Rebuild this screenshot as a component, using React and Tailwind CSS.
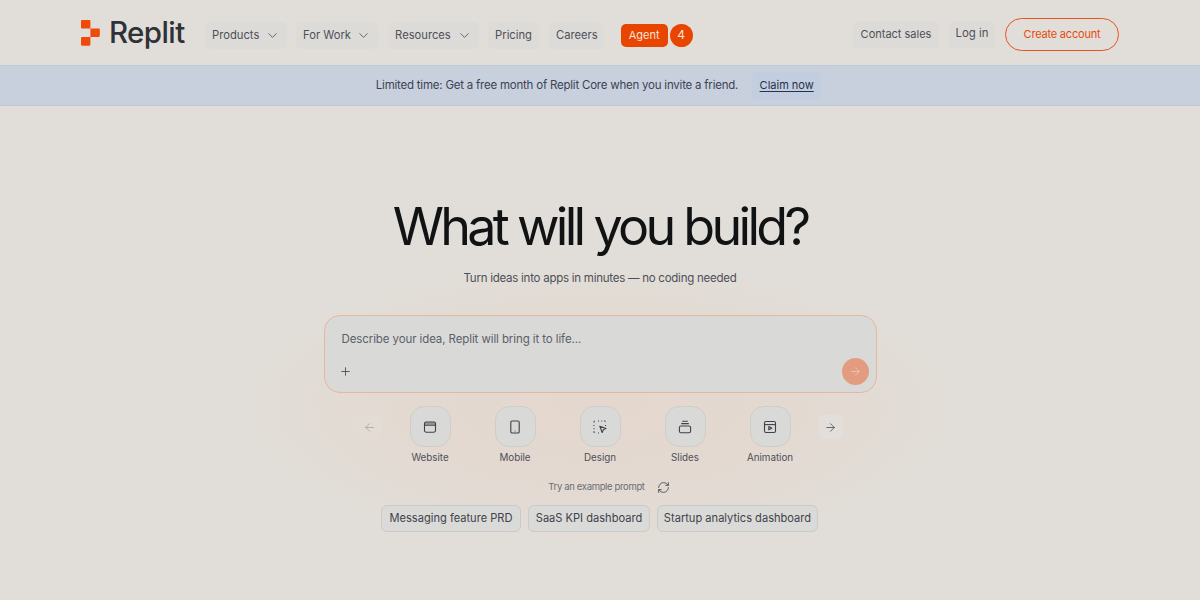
import React from "react";
import { ChevronDown, ArrowLeft, ArrowRight, Plus, RefreshCw } from "lucide-react";

function Logo() {
  return (
    <svg width="19" height="26" viewBox="0 0 19 26" className="shrink-0">
      <path d="M0 1.2C0 .5.5 0 1.2 0h7c.7 0 1.2.5 1.2 1.2V8.6H1.2C.5 8.6 0 8.1 0 7.4z" fill="#f04a0a" />
      <path d="M9.4 8.6h8.2c.7 0 1.2.5 1.2 1.2v6c0 .7-.5 1.2-1.2 1.2H9.4z" fill="#f04a0a" />
      <path d="M1.2 17h8.2v7.6c0 .7-.5 1.2-1.2 1.2h-7c-.7 0-1.2-.5-1.2-1.2v-6.4C0 17.5.5 17 1.2 17z" fill="#f04a0a" />
    </svg>
  );
}

function NavItem({ label, chevron, className }) {
  return (
    <div className={"flex h-[27px] items-center justify-between whitespace-nowrap rounded-[5px] bg-[#dddbd7] pl-[7.5px] pr-[7px] text-[11.2px] text-[#4d5059] " + className}>
      <span>{label}</span>
      {chevron && <ChevronDown size={15} strokeWidth={1.4} className="text-[#55575e]" />}
    </div>
  );
}

function WebsiteIcon() {
  return (
    <svg width="14" height="14" viewBox="0 0 14 14" fill="none" stroke="#3f424a" strokeWidth="1.1">
      <rect x="1.5" y="2" width="11" height="10.2" rx="1.6" />
      <path d="M1.5 5.2h11" />
      <path d="M2 3.5h10" strokeWidth="2.2" opacity=".45" />
    </svg>
  );
}
function MobileIcon() {
  return (
    <svg width="14" height="14" viewBox="0 0 14 14" fill="none" stroke="#3f424a" strokeWidth="1.1">
      <rect x="2.8" y="1" width="8.4" height="12" rx="1.3" />
      <path d="M6.6 11h.8" />
    </svg>
  );
}
function DesignIcon() {
  return (
    <svg width="14" height="14" viewBox="0 0 14 14" fill="none" stroke="#3f424a" strokeWidth="1.1">
      <path d="M1 2.5V2a1 1 0 0 1 1-1h.5M5 1h1M8.2 1h1M11 1h.5a1 1 0 0 1 1 1v.8M12.5 5v1M1 5v1M1 8.2v1M1 11.3v.7a1 1 0 0 0 1 1h.6M5 13h1" strokeDasharray="1.6 1" />
      <path d="M6.8 6.2l6.2 2.2-2.6 1.2-1.2 2.9z" strokeLinejoin="round" />
    </svg>
  );
}
function SlidesIcon() {
  return (
    <svg width="14" height="14" viewBox="0 0 14 14" fill="none" stroke="#3f424a" strokeWidth="1.1">
      <path d="M4.2 1.2h5.6M3.2 3.6h7.6" />
      <rect x="1.4" y="6" width="11.2" height="6.8" rx="1.6" />
    </svg>
  );
}
function AnimationIcon() {
  return (
    <svg width="14" height="14" viewBox="0 0 14 14" fill="none" stroke="#3f424a" strokeWidth="1.1">
      <rect x="1.5" y="1.5" width="11" height="11" rx="1.5" />
      <path d="M1.5 4.6h11" />
      <path d="M5.8 6.6l3 1.6-3 1.6z" strokeLinejoin="round" />
    </svg>
  );
}

function Tile({ icon, label }) {
  return (
    <div className="flex w-[85px] flex-col items-center">
      <div className="flex h-[41px] w-[41px] items-center justify-center rounded-[14px] border border-[#cfcdc8] bg-[#d9d9d7]">
        {icon}
      </div>
      <div className="mt-[3px] text-[9.8px] leading-[16px] text-[#4d5059]">{label}</div>
    </div>
  );
}

function Chip({ label, className }) {
  return (
    <div className={"flex h-[27px] items-center justify-center rounded-[6px] border border-[#cbcac6] bg-[#dadad8] text-[11.1px] text-[#3f424a] " + className}>
      {label}
    </div>
  );
}

export default function App() {
  return (
    <div className="relative h-[600px] w-full overflow-hidden bg-[#e1ded9] font-['Inter',sans-serif]">
      <header className="flex h-[65px] items-center pl-[81px] pr-[81px]">
        <Logo />
        <span className="ml-[9px] mt-[1px] text-[29.5px] font-medium leading-none tracking-[-0.6px] text-[#2f3136]">Replit</span>
        <div className="ml-[20px] mt-[5px] flex items-center gap-[9px]">
          <NavItem label="Products" chevron className="w-[82px]" />
          <NavItem label="For Work" chevron className="w-[82px]" />
          <NavItem label="Resources" chevron className="ml-[1px] w-[91px]" />
          <NavItem label="Pricing" className="w-[52px]" />
          <NavItem label="Careers" className="w-[55px]" />
        </div>
        <div className="ml-[17px] mt-[5px] flex items-center">
          <div className="flex h-[23px] w-[47px] items-center justify-center rounded-[5px] bg-[#e84500] text-[11px] text-[#fbe4d8]">Agent</div>
          <div className="ml-[2px] flex h-[23px] w-[23px] items-center justify-center rounded-full bg-[#e84500] text-[12px] text-[#fbe4d8]">4</div>
        </div>
        <div className="ml-auto mt-[4px] flex items-center">
          <div className="-mt-[1px] flex h-[27px] w-[86px] items-center justify-center rounded-[5px] bg-[#dddbd7] text-[11px] text-[#4d5059]">Contact sales</div>
          <div className="-mt-[1px] ml-[10px] flex h-[27px] w-[46px] items-center justify-center rounded-[5px] bg-[#dddbd7] text-[11.4px] text-[#4d5059]">Log in</div>
          <div className="ml-[10px] flex h-[33px] w-[114px] items-center justify-center rounded-full border border-[#e8531c] text-[11px] tracking-[-0.2px] text-[#e8490c]">Create account</div>
        </div>
      </header>

      <div className="flex h-[41px] items-center justify-center border-y border-[#bfc9da] bg-[#c8d0de] pr-[3px] text-[11.5px] tracking-[-0.22px] text-[#3c4354]">
        <span>Limited time: Get a free month of Replit Core when you invite a friend.</span>
        <span className="ml-[14px] flex h-[28px] w-[69px] items-center justify-center rounded-[5px] bg-[#c2cddf] text-[11px] tracking-normal text-[#26314a] underline underline-offset-2">Claim now</span>
      </div>

      <main className="relative flex flex-col items-center">
        <div className="pointer-events-none absolute left-[220px] top-[150px] h-[300px] w-[760px] rounded-full bg-[radial-gradient(closest-side,#e4d7ce_0%,#e3d9d1_50%,#e1ded900_100%)]" />
        <h1 className="relative mt-[89px] text-[52px] font-normal leading-[64px] tracking-[-3.7px] text-[#111214]">What will you build?</h1>
        <p className="relative mt-[9px] text-[11.5px] leading-[20px] tracking-[-0.25px] text-[#4d5059]">Turn ideas into apps in minutes — no coding needed</p>

        <div className="relative mt-[27px] h-[78px] w-[553px] rounded-[16px] border border-[#e6b7a0] bg-[#d9d9d8]">
          <div className="pl-[17px] pt-[13px] text-[11.5px] leading-[20px] tracking-[-0.1px] text-[#5c5f68]">Describe your idea, Replit will bring it to life...</div>
          <div className="mt-[9px] flex items-center justify-between pl-[14px] pr-[7px]">
            <Plus size={13} strokeWidth={1.5} className="text-[#3f424a]" />
            <div className="flex h-[27px] w-[27px] items-center justify-center rounded-full bg-[#e39c80]">
              <ArrowRight size={13} strokeWidth={1.4} className="text-[#f2cdbb]" />
            </div>
          </div>
        </div>

        <div className="relative mt-[13px] flex items-start">
          <div className="mr-[6px] mt-[9px] flex h-[24px] w-[24px] items-center justify-center rounded-[5px] bg-[#e3dcd5]">
            <ArrowLeft size={13} strokeWidth={1.4} className="text-[#a3a3a3]" />
          </div>
          <Tile icon={<WebsiteIcon />} label="Website" />
          <Tile icon={<MobileIcon />} label="Mobile" />
          <Tile icon={<DesignIcon />} label="Design" />
          <Tile icon={<SlidesIcon />} label="Slides" />
          <Tile icon={<AnimationIcon />} label="Animation" />
          <div className="ml-[6px] mt-[9px] flex h-[24px] w-[24px] items-center justify-center rounded-[5px] bg-[#e2ded9]">
            <ArrowRight size={13} strokeWidth={1.4} className="text-[#3f424a]" />
          </div>
        </div>

        <div className="relative ml-[18px] mt-[13px] flex h-[16px] items-center gap-[12px] text-[9.5px] tracking-[-0.35px] text-[#6b6d74]">
          <span>Try an example prompt</span>
          <RefreshCw size={13} strokeWidth={1.5} className="text-[#3f424a]" />
        </div>

        <div className="relative mr-[1px] mt-[10px] flex items-center gap-[7px]">
          <Chip label="Messaging feature PRD" className="w-[140px]" />
          <Chip label="SaaS KPI dashboard" className="w-[122px]" />
          <Chip label="Startup analytics dashboard" className="w-[161px]" />
        </div>
      </main>
    </div>
  );
}
